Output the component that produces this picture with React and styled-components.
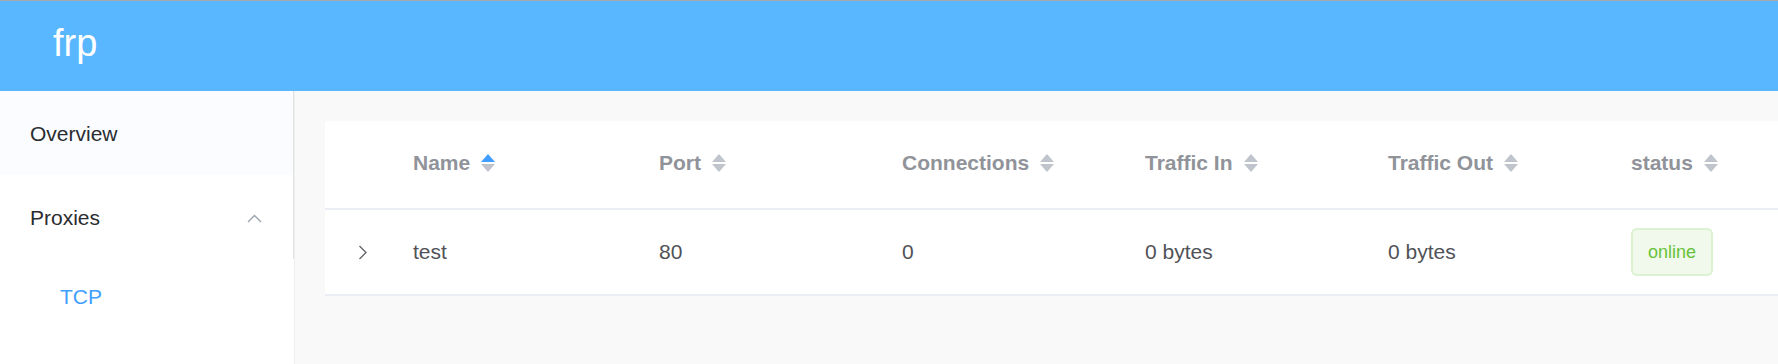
import React from 'react'
import styled, { createGlobalStyle } from 'styled-components'

const GlobalStyle = createGlobalStyle`
  html, body {
    margin: 0;
    padding: 0;
    background: #f9f9f9;
    font-family: "Liberation Sans", Arial, sans-serif;
  }
  * { box-sizing: border-box; }
`;

const Page = styled.div`
  display: flex;
  flex-direction: column;
  height: 364px;
  overflow: hidden;
`;

const Header = styled.header`
  height: 91px;
  flex-shrink: 0;
  border-top: 1px solid #a8a8a8;
  background: #58b7ff;
  display: flex;
  align-items: center;
  padding-left: 53px;
`;

const Logo = styled.div`
  color: #fff;
  font-size: 38px;
  line-height: 1;
  margin-top: -6px;
`;

const Body = styled.div`
  display: flex;
  flex: 1;
  min-height: 0;
`;

const Aside = styled.aside`
  width: 295px;
  flex-shrink: 0;
  background: #fff;
  border-right: 1px solid #efefef;
`;

const MenuItem = styled.div`
  height: ${p => (p.$sub ? 75 : 84)}px;
  display: flex;
  align-items: center;
  justify-content: space-between;
  padding: ${p => (p.$sub ? 0 : 2)}px 31px 0 ${p => (p.$sub ? 60 : 30)}px;
  font-size: 21px;
  color: ${p => (p.$active ? '#409eff' : '#2a2c30')};
  background: ${p => (p.$hover ? '#fafcff' : '#fff')};
  border-right: ${p => (p.$sub ? 'none' : '1px solid #e2e2e2')};
`;

const Main = styled.main`
  flex: 1;
  min-width: 0;
  overflow: hidden;
  padding: 30px 0 0 30px;
`;

const Table = styled.div`
  width: 1524px;
  background: #fff;
`;

const Row = styled.div`
  display: grid;
  grid-template-columns: 61px 246px repeat(4, 243px) 1fr;
  align-items: center;
  height: ${p => (p.$head ? 89 : 86)}px;
  padding-bottom: ${p => (p.$head ? 4 : 0)}px;
  border-bottom: 2px solid #ebeef5;
`;

const HeadCell = styled.div`
  display: flex;
  align-items: center;
  padding-left: 27px;
  font-size: 21px;
  font-weight: bold;
  color: #909399;
`;

const Cell = styled.div`
  padding-left: 27px;
  font-size: 21px;
  color: #505257;
`;

const ExpandCell = styled.div`
  display: flex;
  justify-content: flex-start;
  padding-left: 33px;
`;

const Caret = styled.span`
  display: inline-flex;
  flex-direction: column;
  gap: 2px;
  margin-left: 11px;
  margin-top: 1px;
`;

const Tri = styled.i`
  width: 0;
  height: 0;
  border-left: 7px solid transparent;
  border-right: 7px solid transparent;
  ${p => (p.$down
    ? `border-top: 8px solid ${p.$on ? '#409eff' : '#c0c4cc'};`
    : `border-bottom: 8px solid ${p.$on ? '#409eff' : '#c0c4cc'};`)}
`;

const Tag = styled.span`
  display: inline-flex;
  align-items: center;
  height: 48px;
  padding: 0 15px;
  font-size: 18px;
  color: #67c23a;
  background: #f0f9eb;
  border: 2px solid #dcf1cf;
  border-radius: 6px;
`;

const SortCaret = ({ asc }) => (
  <Caret>
    <Tri $on={asc} />
    <Tri $down />
  </Caret>
)

const columns = ['Name', 'Port', 'Connections', 'Traffic In', 'Traffic Out', 'status']

const proxies = [
  { name: 'test', port: 80, conns: 0, trafficIn: '0 bytes', trafficOut: '0 bytes', status: 'online' }
]

export default function App() {
  return (
    <Page>
      <GlobalStyle />
      <Header>
        <Logo>frp</Logo>
      </Header>
      <Body>
        <Aside>
          <MenuItem $hover>Overview</MenuItem>
          <MenuItem>
            Proxies
            <svg width="15" height="9" viewBox="0 0 15 9">
              <polyline points="1,8 7.5,1.5 14,8" fill="none" stroke="#9aa3ad" strokeWidth="1.3" />
            </svg>
          </MenuItem>
          <MenuItem $sub $active>TCP</MenuItem>
        </Aside>
        <Main>
          <Table>
            <Row $head>
              <div />
              {columns.map((c, i) => (
                <HeadCell key={c}>
                  {c}
                  <SortCaret asc={i === 0} />
                </HeadCell>
              ))}
            </Row>
            {proxies.map(p => (
              <Row key={p.name}>
                <ExpandCell>
                  <svg width="10" height="15" viewBox="0 0 10 15">
                    <polyline points="1.5,1 8,7.5 1.5,14" fill="none" stroke="#606266" strokeWidth="1.3" />
                  </svg>
                </ExpandCell>
                <Cell>{p.name}</Cell>
                <Cell>{p.port}</Cell>
                <Cell>{p.conns}</Cell>
                <Cell>{p.trafficIn}</Cell>
                <Cell>{p.trafficOut}</Cell>
                <Cell><Tag>{p.status}</Tag></Cell>
              </Row>
            ))}
          </Table>
        </Main>
      </Body>
    </Page>
  )
}
